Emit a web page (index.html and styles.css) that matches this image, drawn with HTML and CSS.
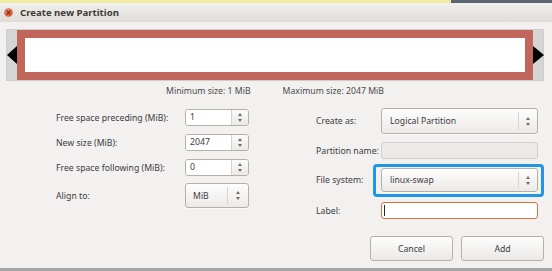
FILE: index.html
```html
<!DOCTYPE html>
<html lang="en">
<head>
    <meta charset="UTF-8">
    <title>Create new Partition</title>
    <link rel="stylesheet" href="styles.css">
</head>
<body>
    <div class="window">
        <!-- Desktop edge above the window -->
        <div class="desktop-strip"></div>

        <!-- Title bar -->
        <div class="titlebar">
            <span class="close-btn">
                <svg width="9" height="9" viewBox="0 0 9 9">
                    <defs>
                        <radialGradient id="closeGrad" cx="40%" cy="35%" r="65%">
                            <stop offset="0" stop-color="#f4916a"/>
                            <stop offset="1" stop-color="#d9522a"/>
                        </radialGradient>
                    </defs>
                    <circle cx="4.5" cy="4.5" r="4.3" fill="url(#closeGrad)"/>
                    <path d="M3 3 L6 6 M6 3 L3 6" stroke="#7a2a12" stroke-width="1.1" stroke-linecap="round"/>
                </svg>
            </span>
            <span class="title">Create new Partition</span>
        </div>

        <div class="content">
            <!-- Graphical partition view -->
            <div class="partition-view">
                <div class="scroll-strip"><span class="arrow-left"></span></div>
                <div class="partition-block"><div class="partition-inner"></div></div>
                <div class="scroll-strip"><span class="arrow-right"></span></div>
            </div>

            <div class="size-limits">
                <span>Minimum size: 1 MiB</span>
                <span>Maximum size: 2047 MiB</span>
            </div>

            <div class="form">
                <!-- Size settings -->
                <div class="form-col sizes">
                    <label>Free space preceding (MiB):</label>
                    <div class="spin">
                        <span class="spin-entry">1</span>
                        <span class="spin-btn"><span class="updown"></span></span>
                    </div>

                    <label>New size (MiB):</label>
                    <div class="spin">
                        <span class="spin-entry">2047</span>
                        <span class="spin-btn"><span class="updown"></span></span>
                    </div>

                    <label>Free space following (MiB):</label>
                    <div class="spin">
                        <span class="spin-entry">0</span>
                        <span class="spin-btn"><span class="updown"></span></span>
                    </div>

                    <label class="align-label">Align to:</label>
                    <div class="combo small">
                        <span class="combo-text">MiB</span>
                        <span class="combo-btn"><span class="updown"></span></span>
                    </div>
                </div>

                <!-- Partition settings -->
                <div class="form-col details">
                    <label>Create as:</label>
                    <div class="combo create-as">
                        <span class="combo-text">Logical Partition</span>
                        <span class="combo-btn"><span class="updown"></span></span>
                    </div>

                    <label>Partition name:</label>
                    <div class="entry disabled"></div>

                    <label class="fs-label">File system:</label>
                    <div class="combo highlighted">
                        <span class="combo-text">linux-swap</span>
                        <span class="combo-btn"><span class="updown"></span></span>
                    </div>

                    <label class="label-label">Label:</label>
                    <div class="entry focused"><span class="cursor"></span></div>
                </div>
            </div>

            <div class="buttons">
                <button>Cancel</button>
                <button>Add</button>
            </div>
        </div>
    </div>
</body>
</html>
```

FILE: styles.css
```css
/* Base styles */
body {
    margin: 0;
    padding: 0;
    font-family: "Noto Sans", "DejaVu Sans", sans-serif;
    font-size: 8.7px;
    color: #3c3c3c;
    background: #f2f1f0;
}

.window {
    width: 552px;
    height: 271px;
    box-sizing: border-box;
    display: flex;
    flex-direction: column;
    background: #f2f1f0;
    border-bottom: 3px solid #a6a6a6;
    overflow: hidden;
}

.desktop-strip {
    height: 3px;
    background: linear-gradient(to right, #f2eca2 451px, #5d6670 451px);
}

/* Title bar */
.titlebar {
    height: 19px;
    display: flex;
    align-items: center;
    padding-left: 4px;
    background: linear-gradient(#f1f0ee, #dfdcd7);
    border-top-right-radius: 5px;
}

.close-btn {
    display: flex;
    width: 9px;
    height: 9px;
    margin-right: 7px;
}

.title {
    font-weight: bold;
    font-size: 9.6px;
    color: #3c3b37;
}

/* Main area */
.content {
    flex: 1;
    display: flex;
    flex-direction: column;
    padding: 7px 8px 0 6px;
}

.partition-view {
    display: flex;
    height: 52px;
    box-sizing: border-box;
    border: 1px solid #cdcdcd;
    background: #f5f5f5;
}

.scroll-strip {
    width: 10px;
    background: #d5d5d5;
    display: flex;
    align-items: center;
}

.arrow-left {
    border-right: 10px solid #000;
    border-top: 9px solid transparent;
    border-bottom: 9px solid transparent;
}

.arrow-right {
    border-left: 11px solid #000;
    border-top: 9px solid transparent;
    border-bottom: 9px solid transparent;
}

.partition-block {
    flex: 1;
    background: #c1665a;
    padding: 8px;
}

.partition-inner {
    height: 100%;
    background: #fff;
}

.size-limits {
    display: flex;
    justify-content: center;
    gap: 32px;
    margin-top: 4px;
    color: #4a4a4a;
    line-height: 13px;
}

/* Form columns */
.form {
    display: flex;
    align-items: flex-start;
    margin-top: 10px;
    padding-left: 50px;
    gap: 67px;
}

.form-col {
    display: grid;
    row-gap: 8px;
    align-items: center;
    align-content: start;
}

.sizes {
    grid-template-columns: 129px 64px;
    margin-top: 1px;
}

.details {
    grid-template-columns: 65px 157px;
}

label {
    white-space: nowrap;
}

.align-label {
    margin-top: -1px;
}

/* Spin buttons */
.spin {
    display: flex;
    height: 17px;
    box-sizing: border-box;
    border: 1px solid #b5b1aa;
    border-radius: 3px;
    overflow: hidden;
}

.spin-entry {
    flex: 1;
    background: #fff;
    padding-left: 4px;
    line-height: 15px;
    border-right: 1px solid #d6d3ce;
}

.spin-btn {
    width: 16px;
    display: flex;
    align-items: center;
    justify-content: center;
    background: linear-gradient(#fbfbfa, #ebe9e6);
}

/* Up/down arrow pair */
.updown {
    position: relative;
    width: 7px;
    height: 9px;
}

.updown::before,
.updown::after {
    content: '';
    position: absolute;
    left: 1px;
    border-left: 2.5px solid transparent;
    border-right: 2.5px solid transparent;
}

.updown::before {
    top: 0;
    border-bottom: 3px solid #6b6b6b;
}

.updown::after {
    bottom: 0;
    border-top: 3px solid #6b6b6b;
}

/* Combo boxes */
.combo {
    position: relative;
    display: flex;
    box-sizing: border-box;
    border: 1px solid #b5b1aa;
    border-radius: 3px;
    background: linear-gradient(#fdfdfd, #eceae7);
    box-shadow: 0 1px 0 rgba(255, 255, 255, 0.7);
}

.combo-text {
    flex: 1;
    display: flex;
    align-items: center;
    padding-left: 8px;
}

.combo-btn {
    width: 18px;
    display: flex;
    align-items: center;
    justify-content: center;
    margin: 3px 0;
    border-left: 1px solid #d8d5d0;
}

.combo.small {
    height: 25px;
    margin-top: -1px;
}

.combo.small .combo-text {
    padding-left: 7px;
}

.combo.small .combo-btn {
    width: 20px;
}

.create-as {
    height: 26px;
}

.highlighted {
    height: 24px;
    margin-top: 1px;
}

/* Blue highlight around file system selector */
.highlighted::after {
    content: '';
    position: absolute;
    left: -9px;
    right: -7px;
    top: -5px;
    bottom: -6px;
    border: 3px solid #2196e6;
    border-radius: 4px;
}

/* Text entries */
.entry {
    height: 17px;
    box-sizing: border-box;
    border-radius: 3px;
    display: flex;
    align-items: center;
}

.entry.disabled {
    background: #eceae7;
    border: 1px solid #d3d0cb;
}

.entry.focused {
    background: #fff;
    border: 1px solid #d7703f;
    margin-top: 2px;
}

.cursor {
    width: 1px;
    height: 11px;
    margin-left: 2px;
    background: #2a2a2a;
}

.fs-label {
    margin-top: 1px;
}

.label-label {
    margin-top: 2px;
}

/* Dialog buttons */
.buttons {
    display: flex;
    justify-content: flex-end;
    gap: 8px;
    margin-top: 17px;
}

.buttons button {
    width: 83px;
    height: 25px;
    font-family: inherit;
    font-size: 8.7px;
    color: #3c3c3c;
    border: 1px solid #b5b1aa;
    border-radius: 3px;
    background: linear-gradient(#fdfdfd, #ebe9e6);
    padding: 0;
}
```
